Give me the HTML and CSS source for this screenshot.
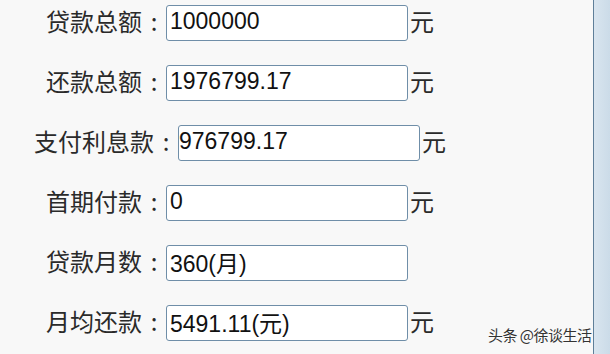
FILE: index.html
```html
<!DOCTYPE html>
<html lang="zh-CN">
<head>
  <meta charset="UTF-8" />
  <meta name="viewport" content="width=device-width, initial-scale=1.0"/>
  <title>贷款计算结果</title>
  <link rel="stylesheet" href="styles.css">
</head>
<body>

  <div class="page">
    <!-- Loan result form -->
    <div class="form">
      <div class="row">
        <label for="total">贷款总额<span class="colon">:</span></label>
        <input type="text" id="total" value="1000000" readonly />
        <span class="unit">元</span>
      </div>
      <div class="row">
        <label for="repay">还款总额<span class="colon">:</span></label>
        <input type="text" id="repay" value="1976799.17" readonly />
        <span class="unit">元</span>
      </div>
      <div class="row">
        <label for="interest">支付利息款<span class="colon">:</span></label>
        <input type="text" id="interest" class="flush" value="976799.17" readonly />
        <span class="unit">元</span>
      </div>
      <div class="row">
        <label for="first">首期付款<span class="colon">:</span></label>
        <input type="text" id="first" value="0" readonly />
        <span class="unit">元</span>
      </div>
      <div class="row">
        <label for="months">贷款月数<span class="colon">:</span></label>
        <input type="text" id="months" value="360(月)" readonly />
        <span class="unit hidden">元</span>
      </div>
      <div class="row">
        <label for="monthly">月均还款<span class="colon">:</span></label>
        <input type="text" id="monthly" value="5491.11(元)" readonly />
        <span class="unit">元</span>
      </div>
    </div>

    <div class="side"></div>
  </div>

  <div class="watermark">头条 @徐谈生活</div>

</body>
</html>
```

FILE: styles.css
```css
html, body {
  margin: 0;
  padding: 0;
}
body {
  width: 610px;
  height: 354px;
  overflow: hidden;
  background: #f8f8f8;
  font-family: "Noto Sans CJK SC", "Liberation Sans", sans-serif;
  color: #2a2a2a;
  position: relative;
}
.page {
  display: flex;
  height: 354px;
}
.form {
  width: 480px;
  padding-top: 5px;
  display: flex;
  flex-direction: column;
  gap: 24px;
}
.side {
  margin-left: auto;
  width: 16px;
  border-left: 1px solid #5f7f99;
  background: linear-gradient(to right, #d9e5ef, #cbdbe8);
}
.row {
  display: flex;
  justify-content: center;
  align-items: center;
  height: 36px;
}
label {
  font-size: 24px;
  line-height: 36px;
  white-space: nowrap;
  margin-top: -4px;
}
.colon {
  display: inline-block;
  width: 24px;
  text-align: center;
}
input {
  box-sizing: border-box;
  width: 242px;
  height: 36px;
  margin: 0;
  padding: 0 3px 3px;
  border: 1px solid #6f8ea8;
  border-radius: 3px;
  background: #fff;
  font-family: "Liberation Sans", "Noto Sans CJK SC", sans-serif;
  font-size: 23px;
  color: #111;
  outline: none;
}
input.flush {
  padding-left: 0;
}
.unit {
  font-size: 24px;
  line-height: 36px;
  margin-left: 2px;
  margin-top: -4px;
}
.hidden {
  visibility: hidden;
}
.watermark {
  position: absolute;
  left: 488px;
  top: 324px;
  font-size: 15px;
  color: #333;
  letter-spacing: -0.5px;
  text-shadow: 0 0 2px #fff;
}
```
